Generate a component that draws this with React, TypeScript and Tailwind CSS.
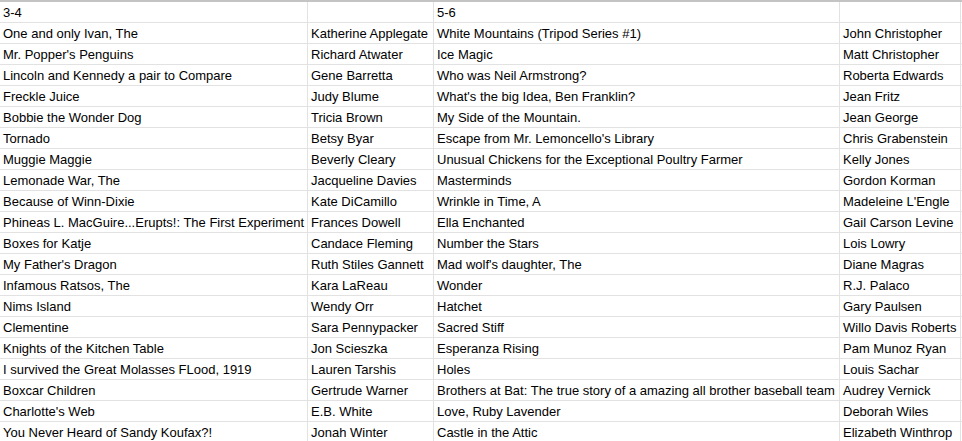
const ROWS: [string, string, string, string][] = [
  ["3-4", "", "5-6", ""],
  ["One and only Ivan, The", "Katherine Applegate", "White Mountains (Tripod Series #1)", "John Christopher"],
  ["Mr. Popper's Penguins", "Richard Atwater", "Ice Magic", "Matt Christopher"],
  ["Lincoln and Kennedy a pair to Compare", "Gene Barretta", "Who was Neil Armstrong?", "Roberta Edwards"],
  ["Freckle Juice", "Judy Blume", "What's the big Idea, Ben Franklin?", "Jean Fritz"],
  ["Bobbie the Wonder Dog", "Tricia Brown", "My Side of the Mountain.", "Jean George"],
  ["Tornado", "Betsy Byar", "Escape from Mr. Lemoncello's Library", "Chris Grabenstein"],
  ["Muggie Maggie", "Beverly Cleary", "Unusual Chickens for the Exceptional Poultry Farmer", "Kelly Jones"],
  ["Lemonade War, The", "Jacqueline Davies", "Masterminds", "Gordon Korman"],
  ["Because of Winn-Dixie", "Kate DiCamillo", "Wrinkle in Time, A", "Madeleine L'Engle"],
  ["Phineas L. MacGuire...Erupts!: The First Experiment", "Frances Dowell", "Ella Enchanted", "Gail Carson Levine"],
  ["Boxes for Katje", "Candace Fleming", "Number the Stars", "Lois Lowry"],
  ["My Father's Dragon", "Ruth Stiles Gannett", "Mad wolf's daughter, The", "Diane Magras"],
  ["Infamous Ratsos, The", "Kara LaReau", "Wonder", "R.J. Palaco"],
  ["Nims Island", "Wendy Orr", "Hatchet", "Gary Paulsen"],
  ["Clementine", "Sara Pennypacker", "Sacred Stiff", "Willo Davis Roberts"],
  ["Knights of the Kitchen Table", "Jon Scieszka", "Esperanza Rising", "Pam Munoz Ryan"],
  ["I survived the Great Molasses FLood, 1919", "Lauren Tarshis", "Holes", "Louis Sachar"],
  ["Boxcar Children", "Gertrude Warner", "Brothers at Bat: The true story of a amazing all brother baseball team", "Audrey Vernick"],
  ["Charlotte's Web", "E.B. White", "Love, Ruby Lavender", "Deborah Wiles"],
  ["You Never Heard of Sandy Koufax?!", "Jonah Winter", "Castle in the Attic", "Elizabeth Winthrop"],
];

function Cell({ text }: { text: string }) {
  return (
    <div className="h-[21px] border-r border-b border-[#e2e2e2] px-[3px] flex items-end pb-[1px] overflow-hidden whitespace-nowrap text-[13px] leading-[16px] text-black">
      {text}
    </div>
  );
}

export default function App() {
  return (
    <div className="w-[962px] h-[441px] overflow-hidden bg-white font-['Liberation_Sans',Arial,sans-serif]">
      <div className="h-[2px] bg-[#c4c4c4]" />
      <div className="grid grid-cols-[308px_126px_406px_121px_1fr]">
        {ROWS.map((r, i) => (
          <div key={i} className="contents">
            <Cell text={r[0]} />
            <Cell text={r[1]} />
            <Cell text={r[2]} />
            <Cell text={r[3]} />
            <Cell text="" />
          </div>
        ))}
      </div>
    </div>
  );
}
